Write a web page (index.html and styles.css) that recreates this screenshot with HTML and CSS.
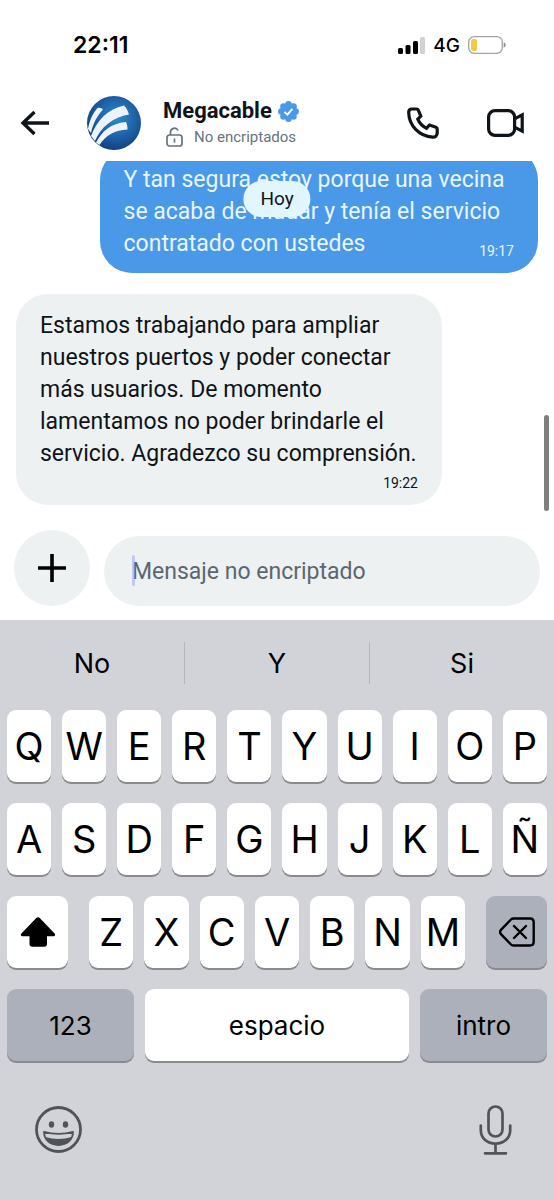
FILE: index.html
```html
<!DOCTYPE html>
<html lang="es">
<head>
    <meta charset="UTF-8">
    <meta name="viewport" content="width=device-width, initial-scale=1.0">
    <title>Megacable</title>
    <link rel="stylesheet" href="styles.css">
</head>
<body>
    <div class="screen">
        <div class="status-bar">
            <span class="clock">22:11</span>
            <div class="status-icons">
                <svg width="27" height="17" viewBox="0 0 27 17">
                    <rect x="0" y="11" width="5" height="6" rx="1.5"/>
                    <rect x="7.5" y="8" width="5" height="9" rx="1.5"/>
                    <rect x="15" y="4" width="5" height="13" rx="1.5"/>
                    <rect x="22" y="0" width="5" height="17" rx="1.5" fill="#d2d2d2"/>
                </svg>
                <span>4G</span>
                <svg width="38" height="18" viewBox="0 0 38 18">
                    <rect x=".7" y=".7" width="33.6" height="16.6" rx="5.5" fill="none" stroke="#a3a3a3" stroke-width="1.3"/>
                    <rect x="3" y="3" width="6" height="12" rx="2.5" fill="#f2c93f"/>
                    <path d="M35.7 6.2c1.2.5 2 1.5 2 2.8s-.8 2.3-2 2.8z" fill="#8e8e8e"/>
                </svg>
            </div>
        </div>

        <header class="chat-header">
            <button class="icon-button" aria-label="Atrás">
                <svg width="30" height="26" viewBox="0 0 30 26" fill="none" stroke="#0f1419" stroke-width="3.4">
                    <path d="M29 13H3M14.5 2L3 13l11.5 11"/>
                </svg>
            </button>
            <svg class="avatar" width="54" height="54" viewBox="0 0 54 54">
                <defs>
                    <radialGradient id="ball" cx=".55" cy=".4" r=".65">
                        <stop offset="0" stop-color="#2e8bc4"/>
                        <stop offset=".5" stop-color="#1f66ab"/>
                        <stop offset="1" stop-color="#123a7c"/>
                    </radialGradient>
                    <clipPath id="round"><circle cx="27" cy="27" r="27"/></clipPath>
                </defs>
                <g clip-path="url(#round)">
                    <rect width="54" height="54" fill="url(#ball)"/>
                    <g fill="#eef3fb">
                        <path d="M10.5 12c2-.8 4 0 5.500 1.500C10.500 19.500 6 27 4 37L1 33C2.500 25 5.500 17.500 10.500 12z"/>
                        <path d="M37 9.500c2.300 2 4 5.500 5 9C26 21 14 31 8 45L4 40C10 24 21 13 37 9.500z"/>
                        <path d="M39 26c1 2 1.700 4.600 1.500 7.500C28 34 19 39 12.500 49L9 46.500C15 35 24 27.500 39 26z"/>
                    </g>
                </g>
            </svg>
            <div class="contact">
                <h1 class="contact-name">
                    Megacable
                    <svg width="21" height="21" viewBox="0 0 21 21">
                        <g fill="#4a99e9">
                            <circle cx="10.5" cy="10.5" r="8.5"/>
                            <circle cx="10.5" cy="3.3" r="3.2"/><circle cx="15.6" cy="5.4" r="3.2"/>
                            <circle cx="17.7" cy="10.5" r="3.2"/><circle cx="15.6" cy="15.6" r="3.2"/>
                            <circle cx="10.5" cy="17.7" r="3.2"/><circle cx="5.4" cy="15.6" r="3.2"/>
                            <circle cx="3.3" cy="10.5" r="3.2"/><circle cx="5.4" cy="5.4" r="3.2"/>
                        </g>
                        <path d="M6.500 10.8l2.900 2.900 5-5.900" fill="none" stroke="#fff" stroke-width="1.9"/>
                    </svg>
                </h1>
                <p class="contact-status">
                    <svg width="17" height="20" viewBox="0 0 17 20" fill="none" stroke="#667380" stroke-width="1.7">
                        <rect x="1" y="8" width="15" height="11" rx="2.5"/>
                        <path d="M4.500 8V5a4 4 0 0 1 7.600-1.500M8.500 11.500v4"/>
                    </svg>
                    No encriptados
                </p>
            </div>
            <div class="call-actions">
                <button class="icon-button" aria-label="Llamar">
                    <svg width="32" height="32" viewBox="0 0 32 32" fill="none" stroke="#0f1419" stroke-width="3.2">
                        <path d="M4.800 2h4.700c.9 0 1.500.4 1.800 1.200l2.500 6-3 3c1.700 4.200 4.700 7.200 8.700 9l3-3.200 6.500 2.300c.8.300 1.200.9 1.200 1.700V26c0 2.600-1.800 4.300-4.500 4.200C12 29.500 2 18.500 1.700 5.500 1.700 3.500 2.800 2 4.800 2z"/>
                    </svg>
                </button>
                <button class="icon-button" aria-label="Videollamada">
                    <svg width="37" height="28" viewBox="0 0 37 28" fill="none" stroke="#0f1419" stroke-width="3.2">
                        <rect x="1.600" y="1.600" width="26" height="24.800" rx="6.500"/>
                        <path d="M27.500 9.800l7.700-4v16.400l-7.700-4"/>
                    </svg>
                </button>
            </div>
        </header>

        <main class="chat">
            <span class="date-pill">Hoy</span>
            <div class="message sent">
                <p>Y tan segura estoy porque una vecina se acaba de mudar y tenía el servicio contratado con ustedes</p>
                <time>19:17</time>
            </div>
            <div class="message received">
                <p>Estamos trabajando para ampliar nuestros puertos y poder conectar más usuarios. De momento lamentamos no poder brindarle el servicio. Agradezco su comprensión.</p>
                <time>19:22</time>
            </div>
            <div class="scroll-thumb"></div>
        </main>

        <form class="composer">
            <button type="button" class="add-button" aria-label="Añadir">
                <svg width="28" height="28" viewBox="0 0 28 28" stroke="#000" stroke-width="3.6">
                    <path d="M14 0v28M0 14h28"/>
                </svg>
            </button>
            <div class="message-box">
                <input type="text" class="message-input" placeholder="Mensaje no encriptado" aria-label="Mensaje">
                <span class="caret"></span>
            </div>
        </form>

        <div class="keyboard">
            <div class="suggestions">
                <button>No</button>
                <button>Y</button>
                <button>Si</button>
            </div>
            <div class="keys">
                <div class="key-row">
                    <button class="key">Q</button>
                    <button class="key">W</button>
                    <button class="key">E</button>
                    <button class="key">R</button>
                    <button class="key">T</button>
                    <button class="key">Y</button>
                    <button class="key">U</button>
                    <button class="key">I</button>
                    <button class="key">O</button>
                    <button class="key">P</button>
                </div>
                <div class="key-row">
                    <button class="key">A</button>
                    <button class="key">S</button>
                    <button class="key">D</button>
                    <button class="key">F</button>
                    <button class="key">G</button>
                    <button class="key">H</button>
                    <button class="key">J</button>
                    <button class="key">K</button>
                    <button class="key">L</button>
                    <button class="key">Ñ</button>
                </div>
                <div class="key-row key-row-wide">
                    <button class="key key-shift" aria-label="Mayúsculas">
                        <svg width="36" height="30" viewBox="0 0 36 30">
                            <path d="M16.500.8c.9-.8 2.100-.8 3 0L34.600 16.500c1.200 1.300.5 2.700-1 2.700H27V27c0 1.700-1 2.800-2.700 2.800H12.200c-1.700 0-2.700-1.100-2.700-2.800v-7.800H2.400c-1.500 0-2.200-1.400-1-2.700z"/>
                        </svg>
                    </button>
                    <div class="key-row key-group">
                        <button class="key">Z</button>
                        <button class="key">X</button>
                        <button class="key">C</button>
                        <button class="key">V</button>
                        <button class="key">B</button>
                        <button class="key">N</button>
                        <button class="key">M</button>
                    </div>
                    <button class="key key-shift key-gray" aria-label="Borrar">
                        <svg width="36" height="30" viewBox="0 0 36 30" fill="none" stroke="#000" stroke-width="2.4" stroke-linecap="round" stroke-linejoin="round">
                            <path d="M14.500 1.500H31c2.300 0 3.700 1.400 3.700 3.700v19.600c0 2.300-1.400 3.700-3.700 3.700H14.500c-1 0-1.800-.3-2.500-1L2.200 17.300c-1.500-1.500-1.500-3.100 0-4.600L12 2.500c.7-.7 1.500-1 2.500-1zM15 9l12 12M27 9L15 21"/>
                        </svg>
                    </button>
                </div>
                <div class="key-row">
                    <button class="key key-word key-side key-gray">123</button>
                    <button class="key key-word">espacio</button>
                    <button class="key key-word key-side key-gray">intro</button>
                </div>
            </div>
            <div class="keyboard-footer">
                <button class="icon-button" aria-label="Emoji">
                    <svg width="47" height="47" viewBox="0 0 47 47" fill="none" stroke="#505358">
                        <circle cx="23.500" cy="23.500" r="22" stroke-width="2.800"/>
                        <g fill="#505358" stroke="none">
                            <ellipse cx="16.500" cy="18.500" rx="2.700" ry="3.300"/>
                            <ellipse cx="30.500" cy="18.500" rx="2.700" ry="3.300"/>
                            <path d="M10.500 31c8 2.500 18 2.500 26 0-2 5-7 8.300-13 8.300S12.500 36 10.500 31z"/>
                        </g>
                        <path d="M9 25.800c9 2.600 20 2.600 29 0 0 8-6 13.200-14.500 13.200S9 33.800 9 25.800z" stroke-width="1.800" stroke-linejoin="round"/>
                    </svg>
                </button>
                <button class="icon-button" aria-label="Dictado">
                    <svg width="33" height="50" viewBox="0 0 33 50" fill="none" stroke="#505358" stroke-width="2.700" stroke-linecap="round">
                        <rect x="9.500" y="1.500" width="14" height="30" rx="7"/>
                        <path d="M1.800 20.500v4.500c0 8 6 13.700 14.700 13.700S31.200 33 31.200 25v-4.500M16.500 38.700v9.300M6 48.300h21"/>
                    </svg>
                </button>
            </div>
        </div>
    </div>
</body>
</html>
```
FILE: styles.css
```css
* {
    box-sizing: border-box;
}
body {
    margin: 0;
    background-color: #fff;
    color: #0f1419;
    font-family: Roboto, "Liberation Sans", sans-serif;
}
button,
input {
    font: inherit;
    color: inherit;
    border: none;
    padding: 0;
}
button {
    cursor: pointer;
}
svg {
    display: block;
    flex: none;
}
.screen {
    display: flex;
    flex-direction: column;
    height: 100vh;
}

/* status bar */
.status-bar {
    display: flex;
    justify-content: space-between;
    align-items: center;
    height: 90px;
    padding: 0 48px 0 73px;
    color: #000;
    font-family: Inter, sans-serif;
}
.clock {
    font-size: 23px;
    font-weight: 600;
}
.status-icons {
    display: flex;
    align-items: center;
    gap: 8px;
    font-size: 19px;
    font-weight: 500;
}

/* header */
.chat-header {
    display: flex;
    align-items: center;
    height: 71px;
    padding: 0 30px 5px 20px;
}
.icon-button {
    background: none;
}
.avatar {
    margin-left: 37px;
}
.contact {
    flex: 1;
    margin-left: 22px;
}
.contact-name {
    display: flex;
    align-items: center;
    gap: 6px;
    margin: 0;
    font-size: 22px;
    font-weight: 700;
    line-height: 28px;
}
.contact-status {
    display: flex;
    align-items: center;
    gap: 11px;
    margin: 0;
    padding-left: 3px;
    color: #667380;
    font-size: 15px;
    line-height: 24px;
}
.call-actions {
    display: flex;
    align-items: center;
    gap: 48px;
}

/* messages */
.chat {
    position: relative;
    flex: 1;
    display: flex;
    flex-direction: column;
    justify-content: flex-end;
    gap: 21px;
    min-height: 0;
    padding: 0 16px 25px;
    overflow: hidden;
}
.message {
    display: flex;
    flex: none;
    flex-direction: column;
    padding: 16px 24px 13px;
    border-radius: 32px;
    font-size: 23px;
    line-height: 32px;
}
.message p {
    margin: 0;
}
.message time {
    align-self: flex-end;
    font-size: 14px;
    line-height: 18px;
}
.sent {
    align-self: flex-end;
    width: 84%;
    background-color: #4a99e9;
    color: #e8f5fd;
}
/* the time shares the last line of the text */
.sent time {
    margin-top: -18px;
}
.received {
    align-self: flex-start;
    width: 426px;
    max-width: 84%;
    background-color: #edf1f2;
}
.received time {
    margin-top: 4px;
}
.date-pill {
    position: absolute;
    top: 20px;
    left: 50%;
    transform: translateX(-50%);
    padding: 0 17px;
    border-radius: 18px;
    background-color: #e1f6fe;
    font-size: 19px;
    line-height: 36px;
    z-index: 1;
}
.scroll-thumb {
    position: absolute;
    right: 5px;
    bottom: 19px;
    width: 5px;
    height: 96px;
    border-radius: 3px;
    background-color: #7f7f7f;
}

/* composer */
.composer {
    display: flex;
    align-items: flex-end;
    gap: 14px;
    padding: 0 14px 14px;
}
.add-button {
    display: flex;
    align-items: center;
    justify-content: center;
    width: 76px;
    height: 76px;
    border-radius: 50%;
    background-color: #edf1f2;
}
.message-box {
    position: relative;
    flex: 1;
}
.message-input {
    display: block;
    width: 100%;
    height: 70px;
    padding: 0 28px;
    border-radius: 35px;
    background-color: #edf1f2;
    font-size: 23px;
}
.message-input::placeholder {
    color: #5b6671;
    opacity: 1;
}
.caret {
    position: absolute;
    top: 19px;
    left: 28px;
    width: 3px;
    height: 31px;
    border-radius: 2px;
    background-color: rgba(150, 160, 250, 0.5);
}

/* keyboard */
.keyboard {
    background-color: #d1d3d9;
    color: #000;
    font-family: Inter, sans-serif;
}
.suggestions {
    display: flex;
    padding: 22px 0 26px;
}
.suggestions button {
    flex: 1;
    height: 42px;
    background: none;
    font-size: 27px;
}
.suggestions button + button {
    border-left: 1px solid #b4b6bc;
}
.keys {
    display: flex;
    flex-direction: column;
    gap: 21px;
    padding: 0 7px;
}
.key-row {
    display: flex;
    gap: 11px;
}
.key-row-wide {
    gap: 21px;
}
.key-group {
    flex: 1;
}
.key {
    display: flex;
    flex: 1;
    align-items: center;
    justify-content: center;
    min-width: 0;
    height: 72px;
    border-radius: 9px;
    background-color: #fff;
    box-shadow: 0 2px 0 #898a8e;
    font-size: 38px;
}
.key-shift {
    flex: 0 0 61px;
}
.key-side {
    flex: 0 0 127px;
}
.key-word {
    font-size: 26px;
}
.key-gray {
    background-color: #abb0bb;
}
.keyboard-footer {
    display: flex;
    align-items: center;
    justify-content: space-between;
    height: 139px;
    padding: 0 42px 2px 35px;
}
```
